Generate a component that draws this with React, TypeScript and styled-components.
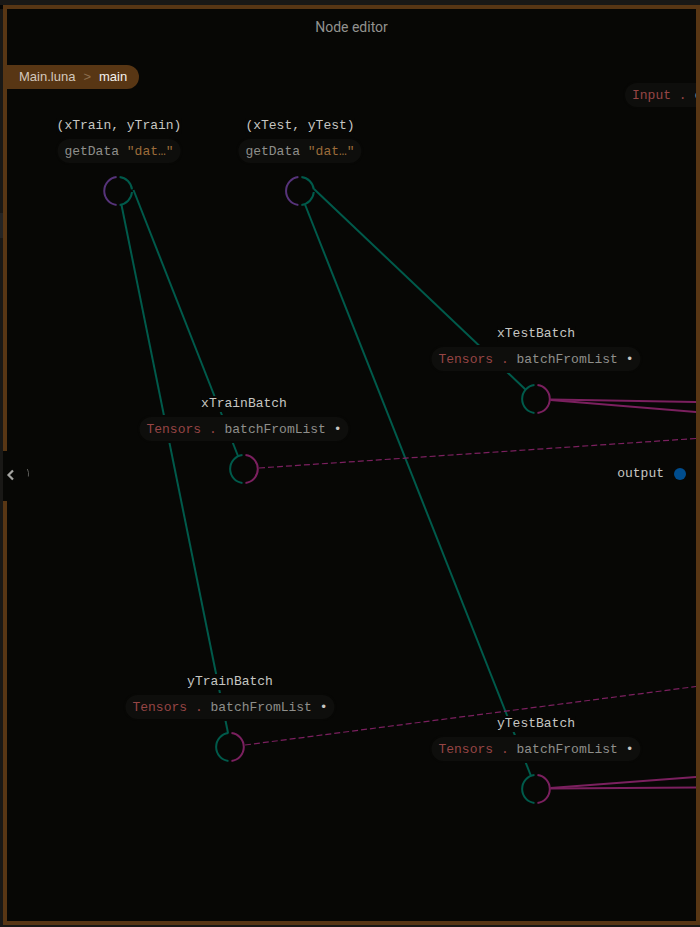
import React from "react";
import styled, { createGlobalStyle } from "styled-components";

const color = {
  canvas: "#070705",
  chrome: "#191816",
  accent: "#583614",
  teal: "#005a4b",
  violet: "#56337a",
  magenta: "#7b205f",
  pill: "#0e0e0c",
  name: "#c6c6c2",
  expr: "#8f8f8b",
  type: "#964545",
  string: "#9c6c3a",
  port: "#004d8e",
};

const GlobalStyle = createGlobalStyle`
  * { box-sizing: border-box; }
  body { margin: 0; background: ${color.canvas}; }
`;

const Page = styled.div`
  display: grid;
  grid-template-columns: 3px minmax(0, 1fr);
  grid-template-rows: 5px minmax(0, 1fr) 2px;
  height: 100vh;
  background: ${color.chrome};
`;

const TopStrip = styled.div`
  grid-column: 1 / -1;
`;

const SideStrip = styled.div`
  border-top: 4px solid #040403;
  display: flex;
  flex-direction: column;
  padding-top: 204px;
`;

const SideMark = styled.div`
  height: 25px;
  background: #242424;
`;

const Frame = styled.main`
  position: relative;
  display: flex;
  flex-direction: column;
  align-items: flex-start;
  border: 4px solid ${color.accent};
  background: ${color.canvas};
`;

const Title = styled.h1`
  margin: 0;
  align-self: stretch;
  padding-top: 8px;
  text-align: center;
  font: 400 14px/20px Roboto, sans-serif;
  color: #92928f;
  z-index: 1;
`;

const Breadcrumbs = styled.nav`
  display: flex;
  align-items: center;
  gap: 8px;
  height: 24px;
  margin-top: 28px;
  padding: 0 12px;
  border-radius: 0 12px 12px 0;
  background: ${color.accent};
  color: #8c6e4e;
  font: 13px/24px "Liberation Sans", sans-serif;
  z-index: 1;
`;

const Crumb = styled.button<{ $current?: boolean }>`
  padding: 0;
  border: 0;
  background: none;
  font: inherit;
  color: ${(p) => (p.$current ? "#f4f1ee" : "#d3c8bd")};
  cursor: pointer;
`;

const Canvas = styled.section`
  position: absolute;
  inset: 0;
  overflow: hidden;
  font: 13px/16px "Liberation Mono", monospace;
`;

const Wires = styled.svg`
  position: absolute;
  inset: 0;
  width: 100%;
  height: 100%;
  fill: none;
`;

const NodeBox = styled.article<{ $x: number; $y: number }>`
  position: absolute;
  left: ${(p) => p.$x}px;
  top: ${(p) => p.$y}px;
  transform: translate(-50%, -73px);
  display: flex;
  flex-direction: column;
  align-items: center;
  white-space: pre;
`;

const NodeName = styled.h2`
  margin: 0 0 5px;
  font: inherit;
  color: ${color.name};
  background: ${color.canvas};
`;

const Expression = styled.div`
  height: 24px;
  padding: 1px 7px 0;
  border-radius: 12px;
  line-height: 24px;
  white-space: pre;
  color: ${color.expr};
  background: ${color.pill};
  box-shadow: 0 0 0 2px ${color.canvas};
`;

const Token = styled.span<{ $kind: "type" | "string" | "hole" }>`
  color: ${(p) => (p.$kind === "hole" ? color.name : color[p.$kind])};
`;

const Ring = styled.svg`
  width: 32px;
  height: 32px;
  margin-top: 12px;
  fill: none;
  stroke-width: 2;
`;

const EdgeNode = styled.div<{ $x: number; $y: number }>`
  position: absolute;
  left: ${(p) => p.$x}px;
  top: ${(p) => p.$y}px;
`;

const OutputPort = styled.button`
  position: absolute;
  right: 10px;
  top: 456px;
  display: flex;
  align-items: center;
  gap: 10px;
  padding: 0;
  border: 0;
  background: none;
  font: inherit;
  color: ${color.name};
`;

const PortName = styled.span`
  padding-top: 1px;
`;

const PortDot = styled.span`
  width: 12px;
  height: 12px;
  border-radius: 50%;
  background: ${color.port};
`;

const PanelToggle = styled.button`
  position: absolute;
  left: -4px;
  top: 442px;
  height: 50px;
  width: 28px;
  padding: 0;
  border: 0;
  background: ${color.canvas};
  display: flex;
  align-items: center;
  z-index: 1;
`;

type Wire = { from: [number, number]; to: [number, number]; stroke: string; dashed?: boolean };

const wires: Wire[] = [
  { from: [126.5, 181], to: [231, 447], stroke: color.teal },
  { from: [114.5, 196], to: [221, 724], stroke: color.teal },
  { from: [307, 180], to: [519, 381], stroke: color.teal },
  { from: [298, 195.5], to: [524, 767], stroke: color.teal },
  { from: [543.5, 390.5], to: [689, 393], stroke: color.magenta },
  { from: [543.5, 391], to: [689, 403], stroke: color.magenta },
  { from: [543.5, 779], to: [689, 768], stroke: color.magenta },
  { from: [543.5, 779.5], to: [689, 778.5], stroke: color.magenta },
  { from: [252, 459], to: [689, 429.5], stroke: color.magenta, dashed: true },
  { from: [238, 736], to: [689, 677.5], stroke: color.magenta, dashed: true },
];

const LoadExpression = () => (
  <>
    getData <Token $kind="string">"dat…"</Token>
  </>
);

const BatchExpression = () => (
  <>
    <Token $kind="type">Tensors .</Token> batchFromList <Token $kind="hole">•</Token>
  </>
);

type NodeData = { name: string; x: number; y: number; source?: boolean };

const nodes: NodeData[] = [
  { name: "(xTrain, yTrain)", x: 112, y: 182, source: true },
  { name: "(xTest, yTest)", x: 293, y: 182, source: true },
  { name: "xTrainBatch", x: 237, y: 460 },
  { name: "xTestBatch", x: 529, y: 390 },
  { name: "yTrainBatch", x: 223, y: 738 },
  { name: "yTestBatch", x: 529, y: 780 },
];

function GraphNode({ name, x, y, source }: NodeData) {
  return (
    <NodeBox $x={x} $y={y}>
      <NodeName>{name}</NodeName>
      <Expression>{source ? <LoadExpression /> : <BatchExpression />}</Expression>
      <Ring viewBox="-15.5 -16 32 32" aria-hidden="true">
        <path d="M-1.5 -13.9A14 14 0 0 0 -1.5 13.9" stroke={source ? color.violet : color.teal} />
        {source ? (
          <path
            d="M1.5 -13.9A14 14 0 0 1 13.9 -1.6M13.9 1A14 14 0 0 1 1.5 13.9"
            stroke={color.teal}
          />
        ) : (
          <path d="M1.5 -13.9A14 14 0 0 1 1.5 13.9" stroke={color.magenta} />
        )}
      </Ring>
    </NodeBox>
  );
}

export default function App() {
  return (
    <>
      <GlobalStyle />
      <Page>
        <TopStrip />
        <SideStrip>
          <SideMark />
        </SideStrip>
        <Frame>
          <Title>Node editor</Title>
          <Breadcrumbs aria-label="Breadcrumb">
            <Crumb>Main.luna</Crumb>
            <span>&gt;</span>
            <Crumb $current>main</Crumb>
          </Breadcrumbs>
          <Canvas aria-label="Node graph">
            <Wires aria-hidden="true">
              {wires.map((w, i) => (
                <line
                  key={i}
                  x1={w.from[0]}
                  y1={w.from[1]}
                  x2={w.to[0]}
                  y2={w.to[1]}
                  stroke={w.stroke}
                  strokeWidth={w.dashed ? 1.2 : 2}
                  strokeDasharray={w.dashed ? "6 3" : undefined}
                />
              ))}
            </Wires>
            {nodes.map((n) => (
              <GraphNode key={n.name} {...n} />
            ))}
            <EdgeNode $x={618} $y={74}>
              <Expression>
                <Token $kind="type">Input .</Token> c
              </Expression>
            </EdgeNode>
            <OutputPort>
              <PortName>output</PortName>
              <PortDot />
            </OutputPort>
          </Canvas>
          <PanelToggle aria-label="Collapse panel">
            <svg width="28" height="20" viewBox="0 0 28 20" fill="none">
              <path d="M10 4.5L5.5 9L10 13.5" stroke="#a5a5a2" strokeWidth="2.2" />
              <path d="M24.3 3Q26.2 6 25.4 10.5" stroke="#5a5a57" strokeWidth="1" />
            </svg>
          </PanelToggle>
        </Frame>
      </Page>
    </>
  );
}
